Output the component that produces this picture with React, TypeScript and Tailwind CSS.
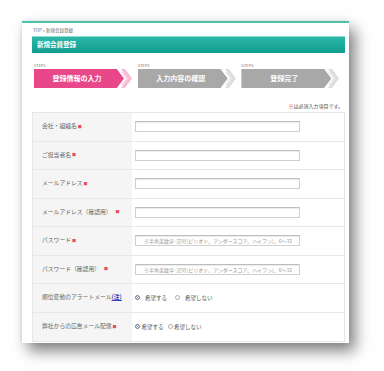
import React from "react";

const jp = { fontFamily: '"Noto Sans CJK JP", "Noto Sans", sans-serif' };

const Req = () => <span className="ml-[1px] text-[4px] text-[#e8505a] align-middle">■</span>;

const Step = ({ label, text, active }: { label: string; text: string; active?: boolean }) => {
  const main = active ? "#e8488a" : "#a8a8a8";
  const tail = active ? "#f6a9c9" : "#d4d4d4";
  return (
    <div className="flex flex-col w-[107px]">
      <span className="text-[4px] leading-[5px] text-[#777] mb-[1px]">{label}</span>
      <div className="flex items-stretch h-[19px]">
        <div
          className="flex items-center justify-center w-[90px] text-white text-[7px] font-bold [clip-path:polygon(0_0,92%_0,100%_50%,92%_100%,0_100%)]"
          style={{ background: main }}
        >
          <span className="-ml-[4px]">{text}</span>
        </div>
        <svg width="12" height="19" viewBox="0 0 12 19" className="-ml-[3px]">
          <polygon points="0,0 4,0 11,9.5 4,19 0,19 7,9.5" fill={tail} opacity="0.8" />
          <polygon points="0,3 2,3 7,9.5 2,16 0,16 5,9.5" fill={tail} opacity="0.5" />
        </svg>
      </div>
    </div>
  );
};

const Input = ({ placeholder }: { placeholder?: string }) => (
  <div className="w-[165px] h-[11px] border border-[#d0d0d0] border-t-[#bdbdbd] bg-white shadow-[inset_0_1px_1px_rgba(0,0,0,0.08)] flex items-center px-[8px] overflow-hidden whitespace-nowrap">
    {placeholder && <span className="text-[5px] text-[#999]">{placeholder}</span>}
  </div>
);

const Radios = ({ tight }: { tight?: boolean }) => (
  <div className="flex items-center text-[5.5px] text-[#555]">
    <span className="w-[5px] h-[5px] rounded-full border border-[#888] bg-[#3a6fd0] ring-1 ring-inset ring-white" />
    <span className={tight ? "ml-[1.5px]" : "ml-[5px]"}>希望する</span>
    <span className={`w-[5px] h-[5px] rounded-full border border-[#aaa] bg-white ${tight ? "ml-[4px]" : "ml-[8px]"}`} />
    <span className={tight ? "ml-[1.5px]" : "ml-[5px]"}>希望しない</span>
  </div>
);

const pw = "※半角英数字･記号(ピリオド、アンダースコア、ハイフン)、6〜32";

const rows: { label: React.ReactNode; field: React.ReactNode }[] = [
  { label: <>会社・組織名<Req /></>, field: <Input /> },
  { label: <>ご担当者名<Req /></>, field: <Input /> },
  { label: <>メールアドレス<Req /></>, field: <Input /> },
  { label: <>メールアドレス（確認用）<span className="ml-[3px]"><Req /></span></>, field: <Input /> },
  { label: <>パスワード<Req /></>, field: <Input placeholder={pw} /> },
  { label: <>パスワード（確認用）<span className="ml-[3px]"><Req /></span></>, field: <Input placeholder={pw} /> },
  {
    label: <>順位変動のアラートメール<span className="text-[#2a3fc4] font-bold underline">(注)</span></>,
    field: <Radios />,
  },
  { label: <>弊社からの広告メール配信<Req /></>, field: <Radios tight /> },
];

export default function App() {
  return (
    <div className="w-[384px] h-[371px] bg-white overflow-hidden pt-[21px] pl-[22px]" style={jp}>
      <div className="w-[327px] h-[322px] bg-white border-t-2 border-[#4fbfae] shadow-[6px_8px_14px_rgba(0,0,0,0.5),-1px_0_3px_rgba(0,0,0,0.08)] px-[10px] pr-[4px]">
        <div className="text-[4.5px] text-[#666] leading-[5px] pt-[5px] pl-[1px]">TOP » 新規会員登録</div>
        <div className="mt-[3px] h-[17px] bg-gradient-to-b from-[#2bb8a8] to-[#0f9d8e] border-t border-[#8fdcd2] flex items-center pl-[5px]">
          <span className="text-white text-[6.5px] font-bold">新規会員登録</span>
        </div>
        <div className="flex mt-[10px] pl-[2px]">
          <Step label="STEP1" text="登録情報の入力" active />
          <Step label="STEP2" text="入力内容の確認" />
          <Step label="STEP3" text="登録完了" />
        </div>
        <div className="text-right text-[5px] text-[#555] mt-[15px] pr-[2px] leading-[6px]">
          <span className="text-[#e8383d]">※</span>は必須入力項目です。
        </div>
        <div className="mt-[3px] border border-[#e6e6e6] w-[313px]">
          {rows.map((r, i) => (
            <div key={i} className="flex h-[28.5px] border-b border-[#e8e8e8] last:border-b-0">
              <div className="w-[99px] bg-[#f5f5f5] flex items-center pl-[9px] text-[5.8px] text-[#666] whitespace-nowrap">
                {r.label}
              </div>
              <div className="flex-1 flex items-center pl-[3px]">{r.field}</div>
            </div>
          ))}
        </div>
      </div>
    </div>
  );
}
